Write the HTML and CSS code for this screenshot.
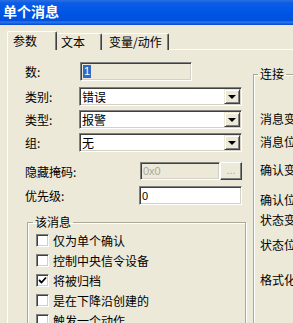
FILE: index.html
```html
<!DOCTYPE html>
<html lang="zh">
<head>
    <meta charset="UTF-8">
    <title>单个消息</title>
    <link rel="stylesheet" href="styles.css">
</head>
<body>

<div class="titlebar">单个消息</div>

<div class="tabs">
    <div class="tab active">参数</div>
    <div class="tab tab-text">文本</div>
    <div class="tab tab-vars">变量/动作</div>
</div>

<div class="panel">
    <div class="left">
        <div class="row r1">
            <span class="label">数:</span>
            <div class="field disabled num"><span class="selected">1</span></div>
        </div>
        <div class="row r2">
            <span class="label">类别:</span>
            <div class="field combo"><span class="val">错误</span><span class="drop"><i></i></span></div>
        </div>
        <div class="row r3">
            <span class="label">类型:</span>
            <div class="field combo"><span class="val">报警</span><span class="drop"><i></i></span></div>
        </div>
        <div class="row r4">
            <span class="label">组:</span>
            <div class="field combo"><span class="val">无</span><span class="drop"><i></i></span></div>
        </div>
        <div class="row r5">
            <span class="label wide">隐藏掩码:</span>
            <div class="field disabled mask">0x0</div>
            <div class="btn dots">...</div>
        </div>
        <div class="row r6">
            <span class="label wide">优先级:</span>
            <div class="field prio">0</div>
        </div>

        <fieldset class="group msg">
            <legend>该消息</legend>
            <div class="check"><span class="box"></span>仅为单个确认</div>
            <div class="check"><span class="box"></span>控制中央信令设备</div>
            <div class="check"><span class="box"><svg width="9" height="9" viewBox="0 0 9 9"><path d="M1 4 L3.5 6.5 L8 1.5" fill="none" stroke="#000" stroke-width="1.8"/></svg></span>将被归档</div>
            <div class="check"><span class="box"></span>是在下降沿创建的</div>
            <div class="check"><span class="box"></span>触发一个动作</div>
        </fieldset>
    </div>

    <fieldset class="group conn">
        <legend>连接</legend>
        <div class="clabel c1">消息变量</div>
        <div class="clabel c2">消息位</div>
        <div class="clabel c3">确认变量</div>
        <div class="clabel c4">确认位</div>
        <div class="clabel c5">状态变量</div>
        <div class="clabel c6">状态位</div>
        <div class="clabel c7">格式化</div>
    </fieldset>
</div>

</body>
</html>
```

FILE: styles.css
```css
body {
    margin: 0;
    width: 293px;
    height: 323px;
    overflow: hidden;
    background-color: #ECE9D8;
    font-family: "Noto Sans CJK SC", "Liberation Sans", sans-serif;
    font-size: 12px;
    color: #000;
}
.titlebar {
    height: 25px;
    box-sizing: border-box;
    padding: 3px 0 0 3px;
    line-height: 16px;
    font-size: 14px;
    font-weight: bold;
    color: #fff;
    background: linear-gradient(#2c6fe0 0, #0a5de8 3px, #0055e5 50%, #0050dc 82%, #2a78ee 88%, #0848d0 100%);
}
.tabs {
    display: flex;
    align-items: flex-end;
    height: 19px;
    margin: 6px 0 -1px 7px;
}
.tab {
    height: 17px;
    box-sizing: border-box;
    line-height: 15px;
    border-top: 1px solid #fff;
    border-left: 1px solid #fff;
    border-right: 1px solid #404040;
    box-shadow: inset -1px 0 0 #808080;
    border-radius: 2px 2px 0 0;
    background: #ECE9D8;
}
.tab.active {
    position: relative;
    z-index: 1;
    height: 19px;
    width: 50px;
    padding-left: 5px;
    line-height: 17px;
}
.tab-text {
    width: 45px;
    padding-left: 4px;
    border-left: none;
}
.tab-vars {
    width: 67px;
    padding-left: 7px;
    border-left: none;
}
.panel {
    display: flex;
    margin-left: 7px;
    padding-left: 17px;
    border-top: 1px solid #fff;
    border-left: 1px solid #fff;
    height: 280px;
}
.left {
    width: 221px;
    flex-shrink: 0;
    padding-top: 12px;
}
.row {
    display: flex;
    align-items: center;
    height: 19px;
}
.r2 { margin-top: 6px; }
.r3, .r4 { margin-top: 4px; }
.r5 { margin-top: 10px; height: 18px; }
.r6 { margin-top: 6px; }
.label {
    width: 54px;
    flex-shrink: 0;
}
.label.wide {
    width: 114px;
}
.field {
    height: 100%;
    box-sizing: border-box;
    border: 1px solid;
    border-color: #808080 #fff #fff #808080;
    box-shadow: inset 1px 1px 0 #404040, inset -1px -1px 0 #d4d0c8;
    background: #fff;
    display: flex;
    align-items: center;
    padding-left: 2px;
    font-family: "Liberation Sans", "Noto Sans CJK SC", sans-serif;
    font-size: 11px;
}
.field.disabled {
    background: #ECE9D8;
    color: #ACA899;
}
.num {
    width: 112px;
    margin-left: 1px;
}
.selected {
    background: #316AC5;
    color: #fff;
    padding: 0 1px;
    line-height: 13px;
}
.combo {
    width: 163px;
    padding: 2px 2px 2px 2px;
    font-family: "Noto Sans CJK SC", sans-serif;
    font-size: 12px;
}
.val {
    flex: 1;
}
.drop {
    width: 16px;
    height: 15px;
    box-sizing: border-box;
    margin-right: -1px;
    border: 1px solid;
    border-color: #ECE9D8 #404040 #404040 #ECE9D8;
    box-shadow: inset 1px 1px 0 #fff, inset -1px -1px 0 #808080;
    background: #ECE9D8;
    display: flex;
    align-items: center;
    justify-content: center;
}
.drop i {
    width: 0;
    height: 0;
    border-left: 4px solid transparent;
    border-right: 4px solid transparent;
    border-top: 4px solid #000;
    margin-top: 1px;
}
.mask {
    width: 80px;
    margin-left: 1px;
}
.btn {
    width: 22px;
    height: 18px;
    box-sizing: border-box;
    border: 1px solid;
    border-color: #fff #404040 #404040 #fff;
    box-shadow: inset -1px -1px 0 #808080;
    text-align: center;
    line-height: 14px;
    color: #ACA899;
    font-family: "Liberation Sans", sans-serif;
    font-size: 11px;
}
.prio {
    width: 103px;
}
.group {
    margin: 0;
    padding: 0 0 0 8px;
    border: 1px solid #ACA899;
    box-shadow: inset 1px 1px 0 #fff, 1px 1px 0 #fff;
    min-width: 0;
}
.group legend {
    padding: 0 2px;
    margin-left: -3px;
    line-height: 12px;
}
.msg {
    width: 219px;
    box-sizing: border-box;
    margin: 11px 0 0 2px;
    height: 120px;
    padding-top: 2px;
}
.check {
    display: flex;
    align-items: center;
    height: 20px;
}
.box {
    width: 13px;
    height: 13px;
    box-sizing: border-box;
    margin-right: 4px;
    border: 1px solid;
    border-color: #808080 #fff #fff #808080;
    box-shadow: inset 1px 1px 0 #404040, inset -1px -1px 0 #d4d0c8;
    background: #fff;
    display: flex;
    align-items: center;
    justify-content: center;
}
.conn {
    margin: 18px 0 0 7px;
    padding-left: 6px;
    width: 120px;
    height: 260px;
    flex-shrink: 0;
}
.conn legend {
    margin-left: -2px;
}
.clabel {
    line-height: 12px;
    white-space: nowrap;
}
.c1 { margin-top: 33px; }
.c2 { margin-top: 11px; }
.c3 { margin-top: 16px; }
.c4 { margin-top: 18px; }
.c5 { margin-top: 8px; }
.c6 { margin-top: 13px; }
.c7 { margin-top: 23px; }
```
